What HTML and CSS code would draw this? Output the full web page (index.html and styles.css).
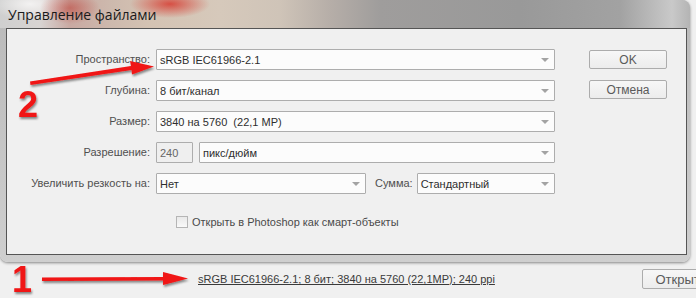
FILE: index.html
```html
<!DOCTYPE html>
<html lang="ru">
<head>
    <meta charset="UTF-8">
    <title>Управление файлами</title>
    <link rel="stylesheet" href="styles.css">
</head>
<body>
    <div class="window">
        <div class="titlebar">Управление файлами</div>
        <div class="panel">
            <div class="form">
                <label class="label">Пространство:</label>
                <div class="select"><span>sRGB IEC61966-2.1</span><i class="caret"></i></div>

                <label class="label">Глубина:</label>
                <div class="select"><span>8 бит/канал</span><i class="caret"></i></div>

                <label class="label">Размер:</label>
                <div class="select"><span>3840 на 5760&nbsp; (22,1 MP)</span><i class="caret"></i></div>

                <label class="label">Разрешение:</label>
                <div class="field-group">
                    <div class="number">240</div>
                    <div class="select grow"><span>пикс/дюйм</span><i class="caret"></i></div>
                </div>

                <label class="label">Увеличить резкость на:</label>
                <div class="field-group">
                    <div class="select sharpen"><span>Нет</span><i class="caret"></i></div>
                    <label class="label amount">Сумма:</label>
                    <div class="select grow"><span>Стандартный</span><i class="caret"></i></div>
                </div>

                <div class="check-row">
                    <span class="checkbox"></span>
                    <span>Открыть в Photoshop как смарт-объекты</span>
                </div>
            </div>

            <div class="buttons">
                <button type="button">OK</button>
                <button type="button">Отмена</button>
            </div>
        </div>
    </div>

    <div class="statusbar">
        <a class="summary">sRGB IEC61966-2.1; 8 бит; 3840 на 5760 (22,1MP); 240 ppi</a>
        <button type="button">Открыть</button>
    </div>

    <!-- red annotation marks drawn over the screenshot -->
    <svg class="marks" width="696" height="298" viewBox="0 0 696 298">
        <defs>
            <filter id="shade" x="-20%" y="-50%" width="140%" height="200%">
                <feDropShadow dx="1" dy="2" stdDeviation="1.2" flood-color="#000" flood-opacity="0.45"/>
            </filter>
        </defs>
        <g fill="#f01414" filter="url(#shade)">
            <path d="M30 81.5 L131 66 L130 61 L154 66.5 L132 74.5 L131.5 70 L30.5 85 Z"/>
            <path d="M42 277.5 L163 277 L163 272 L188 278.5 L163 285 L163 280.5 L42 281 Z"/>
            <text x="18" y="117" class="digit">2</text>
            <text x="12" y="292" class="digit">1</text>
        </g>
    </svg>
</body>
</html>
```

FILE: styles.css
```css
body {
    margin: 0;
    width: 696px;
    height: 298px;
    overflow: hidden;
    position: relative;
    background-color: #f0f0f0;
    font-family: "Liberation Sans", Arial, sans-serif;
    font-size: 11px;
    color: #555;
}
.window {
    width: 690px;
    height: 262px;
    display: flex;
    flex-direction: column;
    border-radius: 0 8px 8px 8px;
    background: linear-gradient(to bottom, #b9b9b9, #cfcfcf);
    box-shadow: 0 1px 3px rgba(0, 0, 0, 0.45);
}
.titlebar {
    height: 28px;
    flex: none;
    padding-left: 8px;
    line-height: 30px;
    font-family: "Open Sans", "Liberation Sans", sans-serif;
    font-size: 14px;
    color: #1a1a1a;
    border-radius: 0 8px 0 0;
    background:
        radial-gradient(ellipse 40px 14px at 170px 4px, rgba(215, 40, 30, 0.75), rgba(215, 40, 30, 0)),
        radial-gradient(ellipse 30px 16px at 70px 8px, rgba(190, 60, 50, 0.55), rgba(190, 60, 50, 0)),
        radial-gradient(ellipse 40px 16px at 30px 4px, rgba(255, 255, 255, 0.7), rgba(255, 255, 255, 0)),
        linear-gradient(to right, #cfcfcf 0, #d8d4d2 40px, #c9a9a2 70px, #cdb9ad 110px, #d4c3b3 150px,
            #d6c9bb 220px, #cfc4b8 280px, #b6aea8 330px, #9f9d9c 380px, #999 520px, #a2a2a2 620px,
            #c9c9c9 672px, #b4b4b4 690px);
}
.panel {
    flex: 1;
    margin: 0 3px 7px 6px;
    border: 1px solid #555;
    background-color: #f0f0f0;
    display: flex;
    align-items: flex-start;
}
.form {
    display: grid;
    grid-template-columns: 143px 399px;
    column-gap: 6px;
    row-gap: 10px;
    grid-auto-rows: 21px;
    padding-top: 20px;
}
.label {
    text-align: right;
    line-height: 21px;
    white-space: nowrap;
    color: #4f4f4f;
}
.select, .number {
    box-sizing: border-box;
    height: 21px;
    border: 1px solid #adadad;
    border-radius: 1px;
    background-color: #fcfcfc;
    display: flex;
    align-items: center;
    padding-left: 3px;
    color: #2e2e2e;
    font-size: 11px;
    position: relative;
}
.select span {
    flex: 1;
}
.caret {
    width: 0;
    height: 0;
    margin-right: 5px;
    border-left: 4px solid transparent;
    border-right: 4px solid transparent;
    border-top: 4px solid #a3a3a3;
}
.field-group {
    display: flex;
    align-items: center;
}
.number {
    width: 37px;
    margin-right: 6px;
    background-color: #efefef;
    color: #666;
}
.grow {
    flex: 1;
}
.sharpen {
    width: 210px;
}
.amount {
    margin: 0 4px 0 9px;
}
.check-row {
    grid-column: 2;
    margin-top: 11px;
    padding-left: 20px;
    display: flex;
    align-items: center;
    height: 13px;
    color: #4a4a4a;
}
.checkbox {
    box-sizing: border-box;
    width: 12px;
    height: 12px;
    margin-right: 4px;
    border: 1px solid #b5b5b5;
    background: linear-gradient(to bottom, #e9e9e9, #f9f9f9);
}
.buttons {
    display: flex;
    flex-direction: column;
    gap: 11px;
    margin: 21px 0 0 34px;
}
button {
    box-sizing: border-box;
    width: 78px;
    height: 19px;
    padding: 0;
    border: 1px solid #acacac;
    border-radius: 2px;
    background: linear-gradient(to bottom, #f7f7f7, #ececec);
    font-family: "Liberation Sans", Arial, sans-serif;
    font-size: 12px;
    color: #5a5a5a;
}
.statusbar {
    display: grid;
    grid-template-columns: 444px 78px;
    align-items: center;
    padding: 7px 0 0 198px;
    width: max-content;
}
.statusbar button {
    height: 20px;
    font-size: 13px;
}
.summary {
    color: #3a3a3a;
    text-decoration: underline;
    font-size: 11px;
}
.marks {
    position: absolute;
    top: 0;
    left: 0;
    pointer-events: none;
}
.digit {
    font-family: "Liberation Sans", Arial, sans-serif;
    font-weight: bold;
    font-size: 36px;
}
```
